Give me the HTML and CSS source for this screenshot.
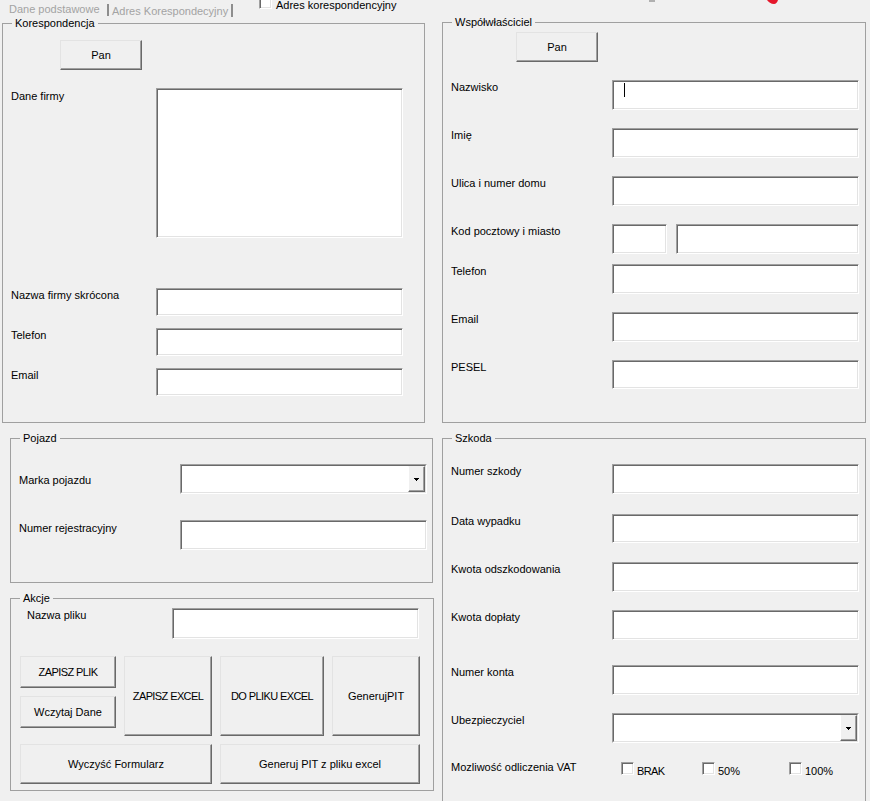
FILE: index.html
```html
<!DOCTYPE html>
<html lang="pl">
<head>
<meta charset="utf-8">
<title>Formularz</title>
<link rel="stylesheet" href="styles.css">
</head>
<body>
<div class="topbar">
  <span class="tab tab-main">Dane podstawowe</span>
  <span class="tab-sep first"></span>
  <span class="tab tab-alt">Adres Korespondecyjny</span>
  <span class="tab-sep second"></span>
  <span class="chk top-check"></span>
  <span class="top-check-label">Adres korespondencyjny</span>
  <span class="mark-grey"></span>
  <svg class="mark-red" width="11" height="4" viewBox="0 0 11 4"><path d="M0 0H11C10.5 2 9 4 7 4C4 4 1.5 2 0 0Z" fill="#e5172b"/></svg>
</div>

<div class="form">
  <div class="col">
    <section class="frame f-kor">
      <div class="frame-title">Korespondencja</div>
      <div class="btn btn-pan kor-pan">Pan</div>
      <div class="row kor-first">
        <div class="lbl lbl-kor lbl-low">Dane firmy</div>
        <div class="tb tb-area"></div>
      </div>
      <div class="row gap-50">
        <div class="lbl lbl-kor">Nazwa firmy skrócona</div>
        <div class="tb tb-28"></div>
      </div>
      <div class="row gap-12">
        <div class="lbl lbl-kor">Telefon</div>
        <div class="tb tb-28"></div>
      </div>
      <div class="row gap-12">
        <div class="lbl lbl-kor">Email</div>
        <div class="tb tb-28"></div>
      </div>
    </section>

    <section class="frame f-poj">
      <div class="frame-title">Pojazd</div>
      <div class="row gap-19">
        <div class="lbl lbl-poj lbl-mid">Marka pojazdu</div>
        <div class="combo">
          <div class="combo-in">
            <div class="drop"><svg width="5" height="3" viewBox="0 0 5 3" shape-rendering="crispEdges"><path d="M0 0h5v1h-1v1h-1v1h-1v-1h-1v-1h-1z"/></svg></div>
          </div>
        </div>
      </div>
      <div class="row gap-26">
        <div class="lbl lbl-poj lbl-low">Numer rejestracyjny</div>
        <div class="tb"></div>
      </div>
    </section>

    <section class="frame f-akc">
      <div class="frame-title">Akcje</div>
      <div class="row gap-3">
        <div class="lbl lbl-akc">Nazwa pliku</div>
        <div class="tb tb-31"></div>
      </div>
      <div class="actions">
        <div class="actions-row">
          <div class="btn-stack">
            <div class="btn btn-small caps">ZAPISZ PLIK</div>
            <div class="btn btn-small">Wczytaj Dane</div>
          </div>
          <div class="btn btn-big w-88 caps">ZAPISZ EXCEL</div>
          <div class="btn btn-big w-104 caps">DO PLIKU EXCEL</div>
          <div class="btn btn-big w-88">GenerujPIT</div>
        </div>
        <div class="actions-row">
          <div class="btn btn-wide w-192">Wyczyść Formularz</div>
          <div class="btn btn-wide w-200">Generuj PIT z pliku excel</div>
        </div>
      </div>
    </section>
  </div>

  <div class="col">
    <section class="frame f-wsp">
      <div class="frame-title">Współwłaściciel</div>
      <div class="btn btn-pan wsp-pan">Pan</div>
      <div class="row gap-18">
        <div class="lbl lbl-r">Nazwisko</div>
        <div class="tb"><span class="caret"></span></div>
      </div>
      <div class="row gap-18">
        <div class="lbl lbl-r">Imię</div>
        <div class="tb"></div>
      </div>
      <div class="row gap-18">
        <div class="lbl lbl-r">Ulica i numer domu</div>
        <div class="tb"></div>
      </div>
      <div class="row gap-18">
        <div class="lbl lbl-r">Kod pocztowy i miasto</div>
        <div class="tb tb-zip"></div>
        <div class="tb tb-city"></div>
      </div>
      <div class="row gap-10">
        <div class="lbl lbl-r">Telefon</div>
        <div class="tb"></div>
      </div>
      <div class="row gap-18">
        <div class="lbl lbl-r">Email</div>
        <div class="tb"></div>
      </div>
      <div class="row gap-18">
        <div class="lbl lbl-r">PESEL</div>
        <div class="tb tb-29"></div>
      </div>
    </section>

    <section class="frame f-szk">
      <div class="frame-title">Szkoda</div>
      <div class="row gap-19">
        <div class="lbl lbl-r">Numer szkody</div>
        <div class="tb"></div>
      </div>
      <div class="row gap-20">
        <div class="lbl lbl-r">Data wypadku</div>
        <div class="tb tb-29"></div>
      </div>
      <div class="row gap-19">
        <div class="lbl lbl-r">Kwota odszkodowania</div>
        <div class="tb"></div>
      </div>
      <div class="row gap-18">
        <div class="lbl lbl-r">Kwota dopłaty</div>
        <div class="tb"></div>
      </div>
      <div class="row gap-25">
        <div class="lbl lbl-r">Numer konta</div>
        <div class="tb"></div>
      </div>
      <div class="row gap-18">
        <div class="lbl lbl-r">Ubezpieczyciel</div>
        <div class="combo">
          <div class="combo-in">
            <div class="drop"><svg width="5" height="3" viewBox="0 0 5 3" shape-rendering="crispEdges"><path d="M0 0h5v1h-1v1h-1v1h-1v-1h-1v-1h-1z"/></svg></div>
          </div>
        </div>
      </div>
      <div class="row gap-19">
        <div class="lbl lbl-vat">Mozliwość odliczenia VAT</div>
        <label class="opt opt-1"><span class="chk"></span><span class="opt-text caps">BRAK</span></label>
        <label class="opt opt-2"><span class="chk"></span><span class="opt-text">50%</span></label>
        <label class="opt"><span class="chk"></span><span class="opt-text">100%</span></label>
      </div>
    </section>
  </div>
</div>
</body>
</html>
```

FILE: styles.css
```css
* { box-sizing: border-box; }

html, body { margin: 0; }

body {
  width: 870px;
  height: 801px;
  overflow: hidden;
  background: #f0f0f0;
  color: #000;
  font: 11px/13px "Liberation Sans", Arial, sans-serif;
}

/* upper-case captions run a little tighter */
.caps { letter-spacing: -0.6px; }

/* ---- tab strip and top checkbox ---- */
.topbar {
  display: flex;
  align-items: flex-start;
  height: 16px;
}
.tab { color: #a3a3a3; white-space: nowrap; }
.tab-main { margin: 3px 0 0 9px; width: 98px; }
.tab-alt { margin: 5px 0 0 3px; width: 119px; }
.tab-sep { width: 2px; margin-top: 4px; background: #8e8e8e; }
.tab-sep.first { height: 12px; }
.tab-sep.second { height: 13px; }
.top-check { margin: -4px 0 0 26px; }
.top-check-label { margin: -1px 0 0 4px; width: 373px; white-space: nowrap; }
.mark-grey { width: 6px; height: 2px; background: #b0b0b0; }
.mark-red { margin-left: 112px; display: block; }

/* ---- two columns of frames ---- */
.form {
  display: grid;
  grid-template-columns: 440px 430px;
  align-items: start;
}
.col {
  display: flex;
  flex-direction: column;
  align-items: flex-start;
}

.frame {
  border: 1px solid #a0a0a0;
  display: flex;
  flex-direction: column;
  align-items: flex-start;
  flex: none;
}
.frame-title {
  margin: -7px 0 0 9px;
  padding: 0 3px;
  background: #f0f0f0;
  white-space: nowrap;
}

.f-kor { margin: 7px 0 0 2px; width: 423px; height: 400px; }
.f-poj { margin: 15px 0 0 10px; width: 423px; height: 145px; }
.f-akc { margin: 15px 0 0 10px; width: 424px; height: 193px; }
.f-wsp { margin: 6px 0 0 2px; width: 424px; height: 401px; }
.f-szk { margin: 15px 0 0 2px; width: 424px; height: 380px; }

/* ---- rows ---- */
.row { display: flex; align-items: flex-start; flex: none; }
.gap-3 { margin-top: 3px; }
.gap-10 { margin-top: 10px; }
.gap-12 { margin-top: 12px; }
.gap-18 { margin-top: 18px; }
.gap-19 { margin-top: 19px; }
.gap-20 { margin-top: 20px; }
.gap-25 { margin-top: 25px; }
.gap-26 { margin-top: 26px; }
.gap-50 { margin-top: 50px; }
.kor-first { margin-top: 18px; }

.lbl { padding-top: 1px; white-space: nowrap; flex: none; }
.lbl-low { padding-top: 2px; }
.lbl-mid { padding-top: 10px; }
.lbl-kor { width: 153px; padding-left: 8px; }
.lbl-r { width: 169px; padding-left: 8px; }
.lbl-poj { width: 169px; padding-left: 8px; }
.lbl-akc { width: 161px; padding-left: 16px; }
.lbl-vat { width: 178px; padding-left: 8px; margin-top: -1px; padding-top: 0; }

/* ---- sunken text boxes ---- */
.tb {
  flex: none;
  width: 247px;
  height: 30px;
  background: #fff;
  border: 1px solid;
  border-color: #a0a0a0 #fff #fff #a0a0a0;
  box-shadow: inset 1px 1px #696969, inset -1px -1px #e3e3e3;
}
.tb-28 { height: 28px; }
.tb-29 { height: 29px; }
.tb-31 { height: 31px; }
.tb-area { height: 150px; }
.tb-zip { width: 55px; }
.tb-city { width: 183px; margin-left: 9px; }

.caret {
  display: block;
  width: 1px;
  height: 14px;
  margin: 2px 0 0 11px;
  background: #000;
}

/* ---- combo boxes ---- */
.combo {
  flex: none;
  width: 247px;
  height: 30px;
  border: 1px solid;
  border-color: #a0a0a0 #fff #fff #a0a0a0;
}
.combo-in {
  height: 100%;
  background: #fff;
  border: 1px solid;
  border-color: #696969 #e3e3e3 #e3e3e3 #696969;
  display: flex;
  justify-content: flex-end;
}
.drop {
  width: 17px;
  height: 100%;
  background: #f0f0f0;
  border: 1px solid;
  border-color: #f0f0f0 #696969 #696969 #fff;
  box-shadow: inset -1px -1px #a0a0a0;
  display: flex;
  align-items: center;
  justify-content: center;
}
.drop svg { display: block; margin-left: -1px; }

/* ---- raised buttons ---- */
.btn {
  flex: none;
  display: flex;
  align-items: center;
  justify-content: center;
  text-align: center;
  background: #f0f0f0;
  border: 1px solid;
  border-color: #e3e3e3 #696969 #696969 #e3e3e3;
  box-shadow: inset -1px -1px #a0a0a0;
  white-space: nowrap;
}
.btn-pan { width: 82px; height: 30px; }
.kor-pan { margin: 10px 0 0 57px; }
.wsp-pan { margin: 3px 0 0 73px; }

.actions {
  margin: 17px 0 0 9px;
  display: flex;
  flex-direction: column;
  gap: 8px;
}
.actions-row { display: flex; align-items: flex-start; gap: 8px; }
.btn-stack { display: flex; flex-direction: column; gap: 8px; }
.btn-small { width: 96px; height: 32px; }
.btn-big { height: 80px; }
.btn-wide { height: 40px; }
.w-88 { width: 88px; }
.w-104 { width: 104px; }
.w-192 { width: 192px; }
.w-200 { width: 200px; }

/* ---- check boxes ---- */
.chk {
  display: block;
  flex: none;
  width: 13px;
  height: 13px;
  background: #fff;
  border: 1px solid;
  border-color: #a0a0a0 #fff #fff #a0a0a0;
  box-shadow: inset 1px 1px #696969, inset -1px -1px #e3e3e3;
}
.opt { display: flex; align-items: flex-start; gap: 3px; flex: none; }
.opt-1 { width: 81px; }
.opt-2 { width: 87px; }
.opt-text { margin-top: 3px; }
```
